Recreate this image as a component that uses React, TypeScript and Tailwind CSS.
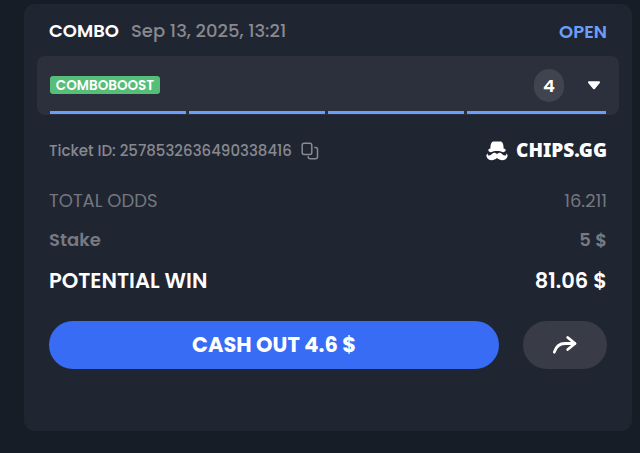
const SELECTIONS = ['first', 'second', 'third', 'fourth'];

function CopyIcon() {
  return (
    <svg width="18" height="18" viewBox="0 0 18 18" fill="none" stroke="#898b92" strokeWidth="1.5" strokeLinecap="round">
      <rect x="1.2" y="1.2" width="9.6" height="11.3" rx="2" />
      <path d="M13.8 5.4h.7a2 2 0 0 1 2 2v7.3a2 2 0 0 1-2 2H9.2a2 2 0 0 1-2-1.9" />
    </svg>
  );
}

function HatIcon() {
  return (
    <svg width="22" height="20" viewBox="0 0 22 20" fill="#fff">
      <path d="M4.400 7.500C4.400 3.800 5.200 1.300 7 .6c1.200-.4 2.600 0 4 0s2.800-.4 4 0c1.800.7 2.600 3.200 2.600 6.900 1.500.4 2.200 1 2.100 1.800-.1 1.100-1.200 1.800-2.600 1.900C13.600 9.600 8.400 9.600 4.900 11.200 3.500 11.100 2.400 10.400 2.300 9.300c-.1-.8.600-1.400 2.100-1.800Z" />
      <path d="M11 13.300c-1.200-1.500-3-2-4.500-.8-1.400 1.200-2.600 2.400-4 1.900-.9-.3-1.100-1.300-.4-2C.7 12.700.2 14 .5 15.500c.8 3.900 6.800 5.100 10.500 1.600 3.700 3.500 9.700 2.300 10.500-1.600.3-1.500-.2-2.800-1.600-3.100.7.700.5 1.700-.4 2-1.400.5-2.600-.7-4-1.900-1.500-1.200-3.300-.7-4.500.8Z" />
    </svg>
  );
}

function ShareIcon() {
  return (
    <svg width="26" height="20" viewBox="0 0 26 20" fill="none" stroke="#fff" strokeWidth="2.800" strokeLinecap="round" strokeLinejoin="round">
      <path d="M2.300 17.200C4 11.200 7.500 8.500 13 8.500h9.800" />
      <path d="m15.700 2.500 7.300 6-7.300 6" />
    </svg>
  );
}

export default function App() {
  return (
    <div className="h-[453px] w-[640px] overflow-hidden bg-[#171d26] pt-1 pl-6 font-['Poppins','Inter',sans-serif] whitespace-nowrap">
      <main className="h-[427px] w-[608px] rounded-[11px] bg-[#202532] px-[13px]">
        <header className="flex h-[52px] items-center justify-between px-3">
          <div className="flex items-center gap-3 text-[18px]">
            <h1 className="w-[70px] font-semibold text-white">COMBO</h1>
            <time className="font-medium text-[#878990]">Sep 13, 2025, 13:21</time>
          </div>
          <span className="pt-0.5 text-[18px] font-semibold text-[#6a9efa]">OPEN</span>
        </header>

        <section className="flex h-[59px] flex-col rounded-lg bg-[#2c303d] px-[13px]">
          <div className="flex h-[55px] items-center justify-between pt-1">
            <span className="mb-0.5 flex h-[18px] w-[110px] items-center justify-center rounded-[3px] bg-[#56be78] pt-[3px] text-[13.500px] font-semibold text-white">
              COMBOBOOST
            </span>
            <div className="flex items-center gap-6 pr-1.5">
              <span className="flex h-[33px] w-[30px] items-center justify-center rounded-full bg-[#41444f] pb-px text-[18px] font-semibold text-white">
                4
              </span>
              <svg width="12" height="9" viewBox="0 0 12 9" fill="#fff" stroke="#fff" strokeWidth="2" strokeLinejoin="round">
                <path d="M1 1.300h10L6 7.300Z" />
              </svg>
            </div>
          </div>
          <div className="flex gap-[3px]">
            {SELECTIONS.map((selection) => (
              <span key={selection} className="h-[3px] w-[136px] bg-[#6a9efa] last:w-[139px]" />
            ))}
          </div>
        </section>

        <section className="px-3">
          <div className="flex h-[71px] items-center justify-between">
            <div className="flex items-center gap-2">
              <span className="w-[244px] pt-0.5 text-[15px] font-medium text-[#878990]">Ticket ID: 2578532636490338416</span>
              <CopyIcon />
            </div>
            <div className="flex w-[121px] items-center justify-between">
              <HatIcon />
              <span className="pb-px font-['Noto_Sans',sans-serif] text-[19px] leading-6 font-black text-white">
                CHIPS.GG
              </span>
            </div>
          </div>
          <dl>
            <div className="flex h-[30px] items-center justify-between pb-0.5 text-[18px] text-[#74777e]">
              <dt>TOTAL ODDS</dt>
              <dd>16.211</dd>
            </div>
            <div className="flex h-12 items-center justify-between pb-0.5 text-[18px] font-semibold text-[#787a82]">
              <dt>Stake</dt>
              <dd>5 $</dd>
            </div>
            <div className="flex h-[34px] items-center justify-between text-[21px] font-semibold text-white">
              <dt>POTENTIAL WIN</dt>
              <dd>81.06 $</dd>
            </div>
          </dl>
          <div className="mt-[23px] flex gap-6">
            <button className="h-12 w-[450px] rounded-full bg-[#386cf4] text-[21px] font-bold text-white">
              CASH OUT 4.6 $
            </button>
            <button aria-label="Share" className="flex h-12 w-[84px] items-center justify-center rounded-full bg-[#393c47]">
              <ShareIcon />
            </button>
          </div>
        </section>
      </main>
    </div>
  );
}
